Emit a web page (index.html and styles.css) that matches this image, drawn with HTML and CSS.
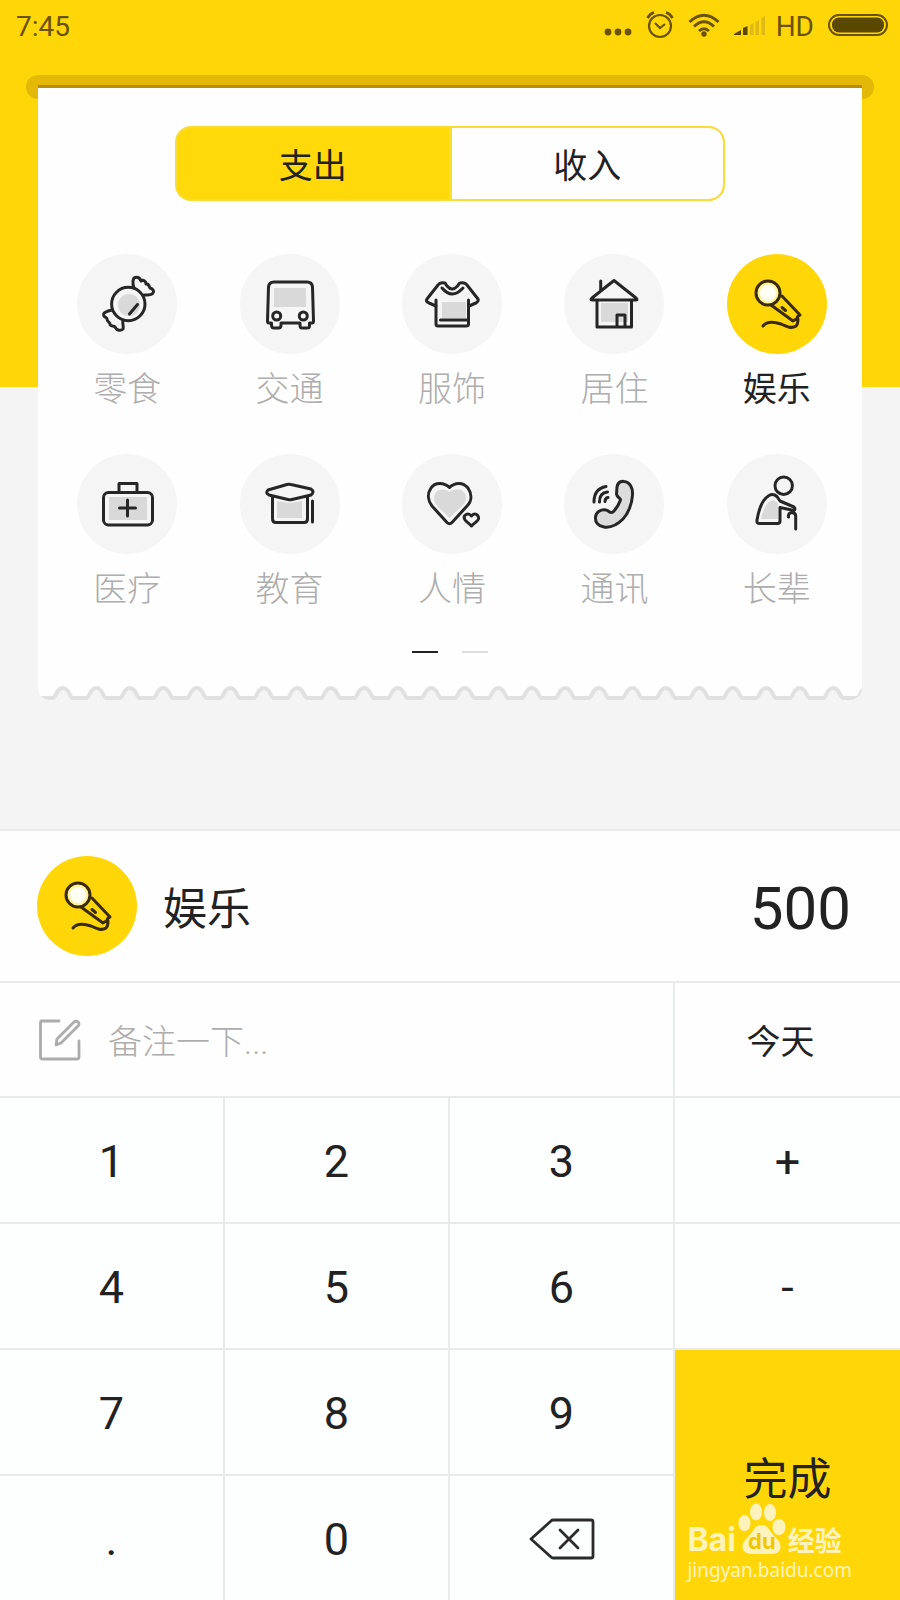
FILE: index.html
```html
<!DOCTYPE html>
<html lang="zh-CN">
<head>
<meta charset="utf-8">
<meta name="viewport" content="width=device-width, initial-scale=1">
<title>记一笔</title>
<link rel="stylesheet" href="styles.css">
</head>
<body>
<svg class="defs" aria-hidden="true">
  <symbol id="mic" viewBox="0 0 100 100">
    <path d="M55 42 L73 61 Q70 62 70 65 Q67 66 66 67 L44 51"/>
    <circle class="glow" cx="41" cy="39" r="12"/>
    <circle class="core" cx="41" cy="39" r="8"/>
    <path d="M55 53.500 L58.500 56.500"/>
    <path d="M36 72 C40 67 48 68 54 70 C60 73 65 75 69 72 Q71 70 71 65"/>
  </symbol>
</svg>

<main class="app">
  <section class="stage">
    <header class="status">
      <span class="time">7:45</span>
      <div class="status-icons">
        <svg width="28" height="26" viewBox="0 0 28 26"><g fill="#6b5200"><circle cx="4" cy="20" r="3.400"/><circle cx="14" cy="20" r="3.400"/><circle cx="24" cy="20" r="3.400"/></g></svg>
        <svg class="alarm" width="28" height="28" viewBox="0 0 28 28"><g fill="none" stroke="#6b5200" stroke-width="2.200"><circle cx="14" cy="15" r="11"/><path d="M9 12 L14 17 L19 13"/><path d="M1.500 7 Q4 2.500 8 1.500 M26.500 7 Q24 2.500 20 1.500" stroke-width="2.800"/></g></svg>
        <svg class="wifi" width="32" height="24" viewBox="0 0 32 24"><g fill="none" stroke="#6b5200" stroke-width="3"><path d="M1.500 9 Q16 -4.500 30.500 9"/><path d="M6 13.500 Q16 4 26 13.500"/><path d="M11 18 Q16 13.500 21 18"/></g><circle cx="16" cy="21" r="2.700" fill="#6b5200"/></svg>
        <svg class="signal" width="32" height="22" viewBox="0 0 32 22"><path d="M0 21 V20 L7 16 V21Z M9 21 V14 L13.500 12 V21Z" fill="#5a4500"/><path d="M16 21 V11 L19.500 9 V21Z M21.500 21 V8 L25 6 V21Z M27.500 21 V4 L31 2 V21Z" fill="#dfb914"/></svg>
        <span class="hd">HD</span>
        <svg width="60" height="22" viewBox="0 0 60 22"><rect x="1" y="1" width="58" height="20" rx="10" fill="none" stroke="#6b5200" stroke-width="2"/><rect x="4" y="3.500" width="52" height="15" rx="7" fill="#5a4700"/></svg>
      </div>
    </header>

    <div class="slot"></div>
    <div class="receipt">
      <div class="tabs" role="tablist">
        <button class="tab active" role="tab" aria-selected="true">支出</button>
        <button class="tab" role="tab" aria-selected="false">收入</button>
      </div>

      <div class="categories">
        <button class="category">
          <svg class="icon" viewBox="0 0 100 100"><circle class="shade" cx="52" cy="51" r="11"/><circle cx="51.300" cy="50" r="16.700"/><path d="M52.500 60 L60.500 50.500"/><path d="M57 34 C55 29 56 24 58 23.500 C61 22.500 63 24 64 27 C66 25.500 69 27 69 30 C72 29 72 33 73 34 C77 35 77 38 76 39 C74 42 70 41 67 41"/><path d="M35 56 C30 57 25 59 27 62 C28 64 30 63 30 65 C30 68 33 68 33 70 C33 73 37 71 38 73 C40 77 44 77 46 75 C47 72 45 69 46 67"/></svg>
          <span>零食</span>
        </button>
        <button class="category">
          <svg class="icon" viewBox="0 0 100 100"><rect class="shade" x="34" y="34" width="32" height="19"/><path d="M31.500 69 H29 Q27.500 69 27.500 67 L28.500 33 Q29 28 34 28 H67 Q72 28 72.500 33 L73.500 67 Q73.500 69 72 69 H69.500 V72 Q69.500 74 67 74 H62 Q60 74 60 71 V69 H41 V71 Q41 74 38.500 74 H34 Q31.500 74 31.500 71 Z"/><circle cx="36.700" cy="62" r="4"/><circle cx="63.300" cy="62" r="4"/></svg>
          <span>交通</span>
        </button>
        <button class="category">
          <svg class="icon" viewBox="0 0 100 100"><rect class="shade" x="40" y="48" width="24" height="16"/><path d="M34 46 V70 Q34 72 36 72 H64 Q66.500 72 66.500 70 V46 M38.500 66 H66"/><path d="M34 52 L27 49 Q23 47 25 45 L36 31 Q38 28 43 29 C44 30 44 31 45 32 Q50 38 55.500 32 C57 30 57 29 58 29 Q63 28 65 31 L76 45 Q77 47 74 49 L67 52"/><path d="M40 34 Q50 46 61 34"/></svg>
          <span>服饰</span>
        </button>
        <button class="category">
          <svg class="icon" viewBox="0 0 100 100"><rect class="shade" x="37" y="49" width="27" height="19"/><path d="M36.700 27 V37 M28 46 Q26 46 28 44 L50 26.500 L72 44 Q74 46 72 46 Z M33 46 V73 H67.500 V46 M53 73 V61 H61 V73"/></svg>
          <span>居住</span>
        </button>
        <button class="category active" aria-pressed="true">
          <svg class="icon"><use href="#mic"/></svg>
          <span>娱乐</span>
        </button>
        <button class="category">
          <svg class="icon" viewBox="0 0 100 100"><rect class="shade" x="32" y="43" width="38" height="23"/><rect x="26.500" y="38.500" width="49" height="32.500" rx="5"/><path d="M42 38 V29.500 H60 V38 M50.500 46 V62 M42.500 54 H58.500"/></svg>
          <span>医疗</span>
        </button>
        <button class="category">
          <svg class="icon" viewBox="0 0 100 100"><path class="shade" d="M37 47 L50 49 L62 47 V64 H37 Z"/><path d="M28 36 L47 30.500 Q49 30 51 30.500 L71 35 Q75 38 71 41 L52 45.500 Q50 46 48 45.500 L29 41 Q25 39 28 36 Z"/><path d="M32.500 43 V65 Q32.500 68.500 36 68.500 H64 Q67.500 68.500 67.500 65 V43 M72.500 47 V68"/></svg>
          <span>教育</span>
        </button>
        <button class="category">
          <svg class="icon" viewBox="0 0 100 100"><path class="shade" d="M47.500 38 C41 33 32 36 32 44 C32 51 40 56 47.500 64 C55 56 64 51 64 44 C64 35 54 33 47.500 38 Z"/><path d="M47.500 33.500 C42 28 33 28 29 34 C25 40 26 47 30 52 L45 68.500 Q47.500 71 50 68.500 L65 52 C70 47 70 40 66 34 C61 28 53 28 47.500 33.500 Z"/><path d="M69.500 62 C66 58 61 61 62.500 65 C63 67 67 69 69.500 72 C72 69 76 67 76.500 65 C77 61 73 58 69.500 62 Z"/></svg>
          <span>人情</span>
        </button>
        <button class="category">
          <svg class="icon" viewBox="0 0 100 100"><path class="filled" d="M53 33 C54 28 57 27 60 27.500 C66 28 69 34 68.500 41 C68 50 64 60 59 65 C53 71 46 74 40 73 C34 72 31 68 31.500 63 C32 58 37 55 42 56 C45 56.500 46 60 49 58 C53 54 55 50 56.500 46 C57 44 53 44 52.500 40 Z"/><path d="M30 48 C30 39 34 34 42 32.500 M35.500 48 C35.500 42 38 38.500 43.500 38 M41 47.500 Q41 44 44 43.500"/></svg>
          <span>通讯</span>
        </button>
        <button class="category">
          <svg class="icon" viewBox="0 0 100 100"><path class="shade" d="M34 65 C36 54 41 47 46 46 L51 49 V65 Z"/><circle cx="56.700" cy="31.700" r="8.700"/><path d="M32 69.500 Q29.500 69.500 30 66 C32 54 36 45 42 41.500 Q46 39 50 42.500 L53 47 L67 53 Q69 55 67 56.500 L53 53.500 V67 Q53 69.500 50.500 69.500 Z M61.500 63 Q61 59 65 58.500 Q68.700 59 68.700 62 V75"/></svg>
          <span>长辈</span>
        </button>
      </div>

      <div class="pages"><i class="page current"></i><i class="page"></i></div>

      <svg class="torn" width="100%" height="16" aria-hidden="true">
        <defs>
          <pattern id="scallop" x="8" width="33.500" height="16" patternUnits="userSpaceOnUse">
            <path d="M-1 14 H7 C10 14 10 4 16.750 4 S23.500 14 26.500 14 H34.500 V17 H-1 Z" fill="#f4f4f4"/>
            <path d="M-1 14 H7 C10 14 10 4 16.750 4 S23.500 14 26.500 14 H34.500" fill="none" stroke="#e0e0e0" stroke-width="4"/>
          </pattern>
        </defs>
        <rect width="100%" height="16" fill="url(#scallop)"/>
      </svg>
    </div>
  </section>

  <section class="panel">
    <div class="summary">
      <svg class="icon selected"><use href="#mic"/></svg>
      <span class="name">娱乐</span>
      <output class="amount">500</output>
    </div>
    <div class="note-row">
      <label class="note">
        <svg width="42" height="42" viewBox="0 0 42 42" fill="none" stroke="#acacac" stroke-width="2.800" stroke-linecap="round" stroke-linejoin="round" aria-hidden="true"><path d="M20 2 H3 Q1.500 2 1.500 4 V38 Q1.500 40 3.500 40 H38 Q40 40 40 38 V22"/><path d="M18 20 L35 3 Q37 1.500 39 3 Q41 5 39 7 L22 24 L17 26 Z"/></svg>
        <input type="text" placeholder="备注一下..." aria-label="备注">
      </label>
      <button class="date">今天</button>
    </div>
    <div class="keypad">
      <button>1</button><button>2</button><button>3</button><button>+</button>
      <button>4</button><button>5</button><button>6</button><button>-</button>
      <button>7</button><button>8</button><button>9</button><button class="done">完成</button>
      <button>.</button><button>0</button>
      <button aria-label="删除"><svg width="66" height="42" viewBox="0 0 66 42" fill="none" stroke="#2b2b2b" stroke-width="2.800" stroke-linecap="round" stroke-linejoin="round"><path d="M2 21 L22 3 Q23 2 24 2 H62 Q64 2 64 4 V38 Q64 40 62 40 H24 Q23 40 22 39 Z"/><path d="M31 12 L49 30 M49 12 L31 30"/></svg></button>
    </div>
    <div class="watermark">
      <div class="brand">
        <span class="bai">Bai</span>
        <span class="paw">
          <svg width="48" height="52" viewBox="0 0 48 52" aria-hidden="true"><g fill="#fff3bd"><ellipse cx="6.500" cy="20" rx="6" ry="8"/><ellipse cx="18" cy="9" rx="6" ry="8.500"/><ellipse cx="32" cy="9.500" rx="6" ry="8.500"/><ellipse cx="41" cy="24" rx="6.500" ry="8"/><path d="M23 22 C31 22 32 30 38 35 C45 41 44 51 34 51 H14 C3 51 2 41 9 35 C15 30 16 22 23 22 Z"/></g></svg>
          <b>du</b>
        </span>
        <span class="exp">经验</span>
      </div>
      <span class="site">jingyan.baidu.com</span>
    </div>
  </section>
</main>
</body>
</html>
```
FILE: styles.css
```css
:root {
  --yellow: #ffd709;
  --ink: #222;
  --grey: #f4f4f4;
  --line: #e9eaea;
  --muted: #adadad;
}
* { box-sizing: border-box; }
body {
  margin: 0;
  color: var(--ink);
  font-family: Roboto, "Noto Sans CJK SC", sans-serif;
  font-weight: 400;
  background: var(--grey);
}
button {
  margin: 0;
  padding: 0;
  border: 0;
  background: none;
  color: inherit;
  font: inherit;
  cursor: pointer;
}
svg { display: block; flex: none; }
.defs { position: absolute; width: 0; height: 0; }

.app {
  display: flex;
  flex-direction: column;
  min-height: 100vh;
}
.stage {
  flex: 1;
  background: linear-gradient(var(--yellow) 387px, var(--grey) 387px);
}

.status {
  display: flex;
  justify-content: space-between;
  align-items: center;
  height: 50px;
  padding: 0 12px 0 16px;
  color: #6b5200;
  font-size: 28px;
  line-height: 32px;
}
.time, .hd { padding-top: 3px; }
.status-icons { display: flex; align-items: center; }
.alarm { margin-left: 14px; }
.wifi { margin-left: 14px; }
.signal { margin-left: 14px; }
.hd { margin: 0 14px 0 10px; }

.slot {
  height: 24px;
  margin: 25px 26px 0;
  border-radius: 12px;
  background: #e3b806;
}
.receipt {
  position: relative;
  margin: -14px 38px 0;
  padding-top: 38px;
  border-top: 3px solid #b98d0b;
  border-radius: 0 0 12px 12px;
  background: #fefefe;
  overflow: hidden;
}

.tabs {
  display: flex;
  width: 550px;
  max-width: 100%;
  height: 75px;
  margin: 0 auto;
  border: 2px solid #f8dc38;
  border-radius: 16px;
  background: #ffd90a;
  overflow: hidden;
}
.tab {
  flex: 1;
  font-size: 34px;
}
.tab + .tab {
  border-left: 3px solid #f8dc38;
  border-radius: 0 14px 14px 0;
  background: #fefefe;
}

.categories {
  display: grid;
  grid-template-columns: repeat(5, 1fr);
  row-gap: 45px;
  padding: 53px 4px 0 8px;
}
.category {
  display: flex;
  flex-direction: column;
  align-items: center;
  gap: 15px;
  color: var(--muted);
  font-size: 34px;
  font-weight: 300;
  line-height: 40px;
}
.category.active { color: var(--ink); font-weight: 400; }
.icon {
  width: 100px;
  height: 100px;
  border-radius: 50%;
  background: #f5f5f5;
  fill: none;
  stroke: #262626;
  stroke-width: 3px;
  stroke-linecap: round;
  stroke-linejoin: round;
}
.icon .shade { fill: #d9d9d9; stroke: none; }
.icon .filled { fill: #dcdcdc; }
.glow { fill: #fff3a0; }
.core { fill: #fffff4; stroke: none; }
.category.active .icon, .selected { background: var(--yellow); stroke: #3a2a08; }

.pages {
  display: flex;
  justify-content: center;
  gap: 24px;
  padding: 42px 0 31px;
}
.page { width: 26px; height: 2px; background: #dedede; }
.page.current { background: #222; }

.panel {
  position: relative;
  border-top: 2px solid #ebebeb;
  background: #fefefe;
}
.summary {
  display: flex;
  align-items: center;
  height: 150px;
  padding: 0 49px 0 37px;
}
.name { margin-left: 26px; font-size: 44px; }
.amount { margin-left: auto; padding-top: 4px; font-size: 60px; }

.note-row {
  display: grid;
  grid-template-columns: 3fr 1fr;
  height: 117px;
  border: solid var(--line);
  border-width: 2px 0;
}
.note {
  display: flex;
  align-items: center;
  gap: 27px;
  padding-left: 39px;
  border-right: 2px solid var(--line);
}
.note input {
  flex: 1;
  min-width: 0;
  padding: 4px 0 0;
  border: 0;
  outline: 0;
  background: none;
  color: var(--ink);
  font: inherit;
  font-size: 34px;
}
.note input::placeholder { color: var(--muted); font-weight: 300; opacity: 1; }
.date {
  padding-right: 14px;
  font-size: 34px;
}

.keypad {
  display: grid;
  grid-template-columns: repeat(4, 1fr);
  grid-auto-rows: 124px;
  row-gap: 2px;
  background: var(--line);
}
.keypad button {
  display: flex;
  justify-content: center;
  align-items: center;
  padding-top: 2px;
  border-right: 2px solid var(--line);
  background: #fdfefe;
  font-size: 45px;
}
.keypad button:nth-child(4n) { border-right: 0; }
.keypad .done {
  grid-row: span 2;
  background: var(--yellow);
  font-size: 44px;
}

.watermark {
  position: absolute;
  right: 48px;
  bottom: 18px;
  color: #fff3bd;
  pointer-events: none;
}
.brand {
  display: flex;
  align-items: flex-end;
  height: 52px;
  margin-bottom: 3px;
}
.bai { font: 700 32px/30px Inter, sans-serif; }
.paw { position: relative; margin: 0 2px; }
.paw b {
  position: absolute;
  right: 0;
  bottom: 2px;
  left: 0;
  color: #f0c800;
  font: 700 22px/24px Inter, sans-serif;
  text-align: center;
}
.exp { font: 700 27px/30px "Noto Sans CJK SC", sans-serif; }
.site { display: block; font: 400 19px/24px "Noto Sans", sans-serif; }
```
